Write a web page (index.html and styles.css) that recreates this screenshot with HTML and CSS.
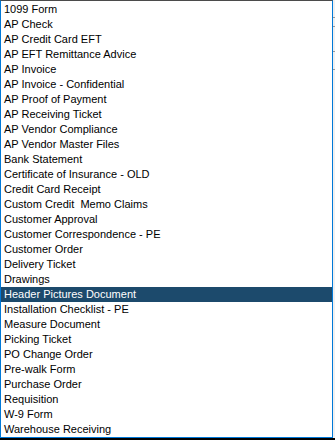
FILE: index.html
```html
<!DOCTYPE html>
<html>
<head>
<meta charset="utf-8">
<link rel="stylesheet" href="styles.css">
</head>
<body>
<div class="frame">
  <div class="main">
    <ul class="list">
      <li class="item">1099 Form</li>
      <li class="item">AP Check</li>
      <li class="item">AP Credit Card EFT</li>
      <li class="item">AP EFT Remittance Advice</li>
      <li class="item">AP Invoice</li>
      <li class="item">AP Invoice - Confidential</li>
      <li class="item">AP Proof of Payment</li>
      <li class="item">AP Receiving Ticket</li>
      <li class="item">AP Vendor Compliance</li>
      <li class="item">AP Vendor Master Files</li>
      <li class="item">Bank Statement</li>
      <li class="item">Certificate of Insurance - OLD</li>
      <li class="item">Credit Card Receipt</li>
      <li class="item">Custom Credit&nbsp; Memo Claims</li>
      <li class="item">Customer Approval</li>
      <li class="item">Customer Correspondence - PE</li>
      <li class="item">Customer Order</li>
      <li class="item">Delivery Ticket</li>
      <li class="item">Drawings</li>
      <li class="item selected">Header Pictures Document</li>
      <li class="item">Installation Checklist - PE</li>
      <li class="item">Measure Document</li>
      <li class="item">Picking Ticket</li>
      <li class="item">PO Change Order</li>
      <li class="item">Pre-walk Form</li>
      <li class="item">Purchase Order</li>
      <li class="item">Requisition</li>
      <li class="item">W-9 Form</li>
      <li class="item">Warehouse Receiving</li>
    </ul>
    <div class="edge">
      <span class="tick t1"></span>
      <span class="tick t2"></span>
      <span class="tick t3"></span>
      <span class="tick t4"></span>
    </div>
  </div>
  <div class="shadow"></div>
</div>
</body>
</html>
```

FILE: styles.css
```css
html, body {
  margin: 0;
  padding: 0;
  background: #ffffff;
}
.frame {
  width: 335px;
  height: 440px;
  display: flex;
  flex-direction: column;
  overflow: hidden;
}
.main {
  display: flex;
  height: 438px;
}
.list {
  list-style: none;
  margin: 0;
  padding: 1px 0 0 0;
  width: 331px;
  height: 436px;
  border-left: 1px solid #0078d7;
  border-right: 1px solid #0078d7;
  border-bottom: 1px solid #0078d7;
  border-top: 1px solid #4b4b4b;
  box-sizing: border-box;
  width: 333px;
  height: 438px;
  background: #ffffff;
  font-family: "Liberation Sans", Arial, sans-serif;
  font-size: 11px;
  color: #000000;
  overflow: hidden;
}
.item {
  height: 15px;
  line-height: 15px;
  padding-left: 3px;
  white-space: nowrap;
}
.selected {
  background: #1c4a6c;
  color: #ffffff;
}
.edge {
  width: 2px;
  height: 438px;
  background: #f0f0f0;
  display: flex;
  flex-direction: column;
}
.tick {
  display: block;
  width: 2px;
  height: 1px;
  background: #9a9a9a;
}
.t1 { margin-top: 17px; }
.t2 { margin-top: 8px; }
.t3 { margin-top: 24px; }
.t4 { margin-top: 17px; }
.shadow {
  height: 2px;
  background: #000000;
}
```
